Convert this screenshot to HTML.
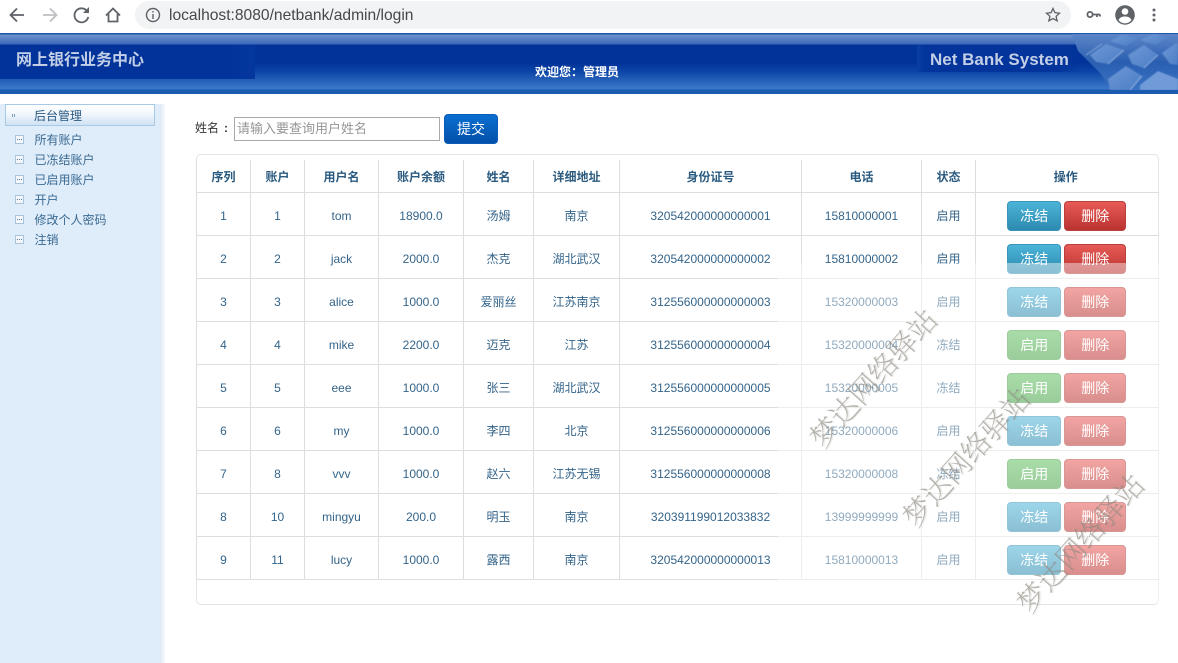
<!DOCTYPE html>
<html lang="zh"><head><meta charset="utf-8"><title>login</title>
<style>
*{box-sizing:border-box}
html,body{margin:0;padding:0;width:1178px;height:663px;overflow:hidden;background:#fff;font-family:"Liberation Sans","Noto Sans CJK SC",sans-serif;font-size:12px;color:#34648a}
.a{position:absolute}
#chrome{left:0;top:0;width:1178px;height:33px;background:#fff}
#pill{left:135px;top:1px;width:936px;height:28px;border-radius:14px;background:#f1f3f4}
#url{left:169px;top:7px;font-size:15.6px;color:#45484c;line-height:18px;white-space:nowrap}
#hdr{left:0;top:33px;width:1178px;height:61px;overflow:hidden;background:linear-gradient(#1d55a6 0,#1d55a6 1px,#6d92cf 2px,#3d69b8 11px,#023399 12px,#023399 30px,#0a44a6 38px,#3c7ac9 56px,#2f72c4 56px,#1b5cb1 57px,#1b5cb1 61px)}
#hl{left:0;top:12px;width:255px;height:34px;background:linear-gradient(90deg,#02339b 0,#02339b 90%,#04379e 100%)}
#hr{left:917px;top:12px;width:165px;height:27px;background:linear-gradient(90deg,#0a3fa3 0,#03349b 5%,#03349b 85%,rgba(3,52,155,0) 100%)}
#sb{left:0;top:104px;width:160px;height:559px;background:#dfecfa}
#sb2{left:160px;top:104px;width:5px;height:559px;background:linear-gradient(90deg,#dfe9f4,#f5f9fd)}
#sbh{left:5px;top:104px;width:150px;height:22px;border:1px solid #a9cae6;background:linear-gradient(#fff,#f2f7fd 45%,#cfe2f5);color:#2a5a80;line-height:22px;padding-left:28px}
.mi{left:34.500px;color:#3a6a92;line-height:16px;white-space:nowrap}
.ic{left:15px;width:9px;height:9px;border:1px solid #a9c3da;background:#f3f7fb}
.ic:after{content:"";position:absolute;left:1px;top:3px;width:5px;height:1px;background:repeating-linear-gradient(90deg,#5b7f9e 0 1px,transparent 1px 2px)}
#lb{left:195px;top:120px;color:#333;line-height:16px;font-size:12px}
#inp{left:234px;top:117px;width:206px;height:24px;border:1px solid #a9a9a9;color:#969696;font-size:13px;line-height:22px;padding-left:2px;background:#fff;white-space:nowrap}
#sub{left:444px;top:114px;width:54px;height:30px;border-radius:4px;background:linear-gradient(#0a6fd0,#0350aa);color:#fff;font-size:14px;text-align:center;line-height:28px;border:1px solid #0a5cb8}
#panel{left:196px;top:154px;width:963px;height:451px;border:1px solid #e4e4e4;border-radius:5px;background:#fff}
table{position:absolute;left:196px;top:160px;border-collapse:collapse;table-layout:fixed;width:962px}
td,th{border:1px solid #dedede;text-align:center;padding:4px 0 0;font-weight:normal;overflow:visible;white-space:nowrap}
tr{height:43px}
tr.h{height:32px}
th{font-weight:bold;color:#2a5a80;border-top:0;padding-top:2px}
td:last-child,th:last-child{border-right:0}
td:last-child{padding-right:1px}
th:last-child{padding-right:3px}
.b{display:inline-block;vertical-align:middle;width:54px;height:30px;border-radius:4px;color:#fff;font-size:14px;line-height:28px;text-align:center;margin-top:1px}
.b+.b{margin-left:3px;width:62px}
.f{background:linear-gradient(#4cb4d8,#2c8ab0);border:1px solid #3a95b8}
.d{background:linear-gradient(#e85b57,#b93330);border:1px solid #b8403d}
.e{background:linear-gradient(#60c060,#4aa34a);border:1px solid #4ea54e}
#fade{left:778px;top:263px;width:400px;height:340px;background:rgba(255,255,255,.45)}
.wm{font-family:"Noto Serif CJK SC","Liberation Serif",serif;font-weight:200;font-size:29px;line-height:36px;color:#8f8a80;opacity:.65;white-space:nowrap;transform:translate(-50%,-50%) rotate(-48deg);text-shadow:1px 1px 1px rgba(120,120,110,.3)}
</style></head><body>
<div class="a" id="chrome"></div>
<div class="a" id="pill"></div>
<svg class="a" style="left:0;top:0" width="170" height="32" viewBox="0 0 170 32" fill="none">
<path d="M24 15H11M17 8.500 10.500 15 17 21.500" stroke="#5f6368" stroke-width="1.800"/>
<path d="M43 15H56M50 8.500 56.500 15 50 21.500" stroke="#bdbfc2" stroke-width="1.800"/>
<path d="M87 11a7 7 0 1 0 1.300 6" stroke="#5f6368" stroke-width="1.800"/><path d="M89 7v6h-6z" fill="#5f6368"/>
<path d="M106 15.500 113 8.500 120 15.500M108.500 14v7.500h9V14" stroke="#5f6368" stroke-width="1.800"/>
<circle cx="153" cy="15" r="6.500" stroke="#5f6368" stroke-width="1.400"/><path d="M153 14v5M153 11v1.500" stroke="#5f6368" stroke-width="1.400"/>
</svg>
<div class="a" id="url">localhost:8080/netbank/admin/login</div>
<svg class="a" style="left:1030px;top:0" width="148" height="32" viewBox="0 0 148 32" fill="none">
<path d="M23 8.500l1.900 4.200 4.600.5-3.400 3.100 1 4.500-4.100-2.300-4.100 2.300 1-4.500-3.400-3.100 4.600-.5z" stroke="#5f6368" stroke-width="1.300"/>
<circle cx="60" cy="14.500" r="2.600" stroke="#5f6368" stroke-width="1.800"/><path d="M62.500 14.500h7.500M67 14.500v2.500M70 14.500v2" stroke="#5f6368" stroke-width="1.800"/>
<circle cx="95" cy="15" r="9.800" fill="#5f6368"/><circle cx="95" cy="11.500" r="3.300" fill="#fff"/><path d="M88.500 20c1.500-3 4-3.500 6.500-3.500s5 .5 6.500 3.500a8 8 0 0 1-13 0z" fill="#fff"/>
<circle cx="124" cy="10" r="1.500" fill="#5f6368"/><circle cx="124" cy="15" r="1.500" fill="#5f6368"/><circle cx="124" cy="20" r="1.500" fill="#5f6368"/>
</svg>

<div class="a" id="hdr">
<div class="a" id="hl"></div><div class="a" id="hr"></div>
<svg class="a" style="left:1070px;top:0" width="108" height="57" viewBox="0 0 108 57">
<defs><linearGradient id="k" x1="0" y1="0" x2="1" y2="1"><stop offset="0" stop-color="#6f98d4"/><stop offset="1" stop-color="#4a7dc6"/></linearGradient>
<linearGradient id="bgk" x1="0" y1="0" x2="0" y2="1"><stop offset="0" stop-color="#5d86c8"/><stop offset=".5" stop-color="#2a5eb0"/><stop offset="1" stop-color="#3a74c4"/></linearGradient>
<filter id="bl"><feGaussianBlur stdDeviation=".5"/></filter></defs>
<path d="M2 1 108 1 108 57 42 57 30 40 8 18Z" fill="url(#bgk)"/>
<g filter="url(#bl)">
<path d="M20 22 36 11 54 17 38 31 26 29Z" fill="url(#k)"/>
<path d="M40 8 52 2 68 5 56 13Z" fill="url(#k)"/>
<path d="M58 22 74 12 88 22 74 35 62 31Z" fill="url(#k)"/>
<path d="M38 46 56 33 72 43 60 57 40 57Z" fill="url(#k)"/>
<path d="M70 7 84 1 98 4 86 12Z" fill="url(#k)"/>
<path d="M92 20 106 10 108 11 108 32 100 31Z" fill="url(#k)"/>
<path d="M70 52 88 38 108 46 108 57 70 57Z" fill="#6f9bd8"/>
<path d="M38 31 54 17M74 35 88 22M60 57 72 43M32 11 16 22" stroke="#b4cbec" stroke-width="1" fill="none" opacity=".6"/>
</g>
</svg>
<div class="a" style="left:16px;top:17px;font-size:16px;font-weight:bold;color:#c3cfe6;line-height:22px;white-space:nowrap">网上银行业务中心</div>
<div class="a" style="left:930px;top:16px;font-size:17px;font-weight:bold;color:#c3cfe6;line-height:22px;white-space:nowrap">Net Bank System</div>
<div class="a" style="left:535px;top:31px;font-size:12px;font-weight:bold;color:#fff;line-height:16px;white-space:nowrap">欢迎您：管理员</div>
</div>

<div class="a" id="sb"></div><div class="a" id="sb2"></div>
<div class="a" id="sbh">后台管理</div>
<div class="a" style="left:12px;top:114px;width:4px;height:3px;background:repeating-linear-gradient(90deg,#7d9cb8 0 1px,transparent 1px 2px)"></div>
<div class="a ic" style="top:135px"></div><div class="a mi" style="top:132px">所有账户</div>
<div class="a ic" style="top:155px"></div><div class="a mi" style="top:152px">已冻结账户</div>
<div class="a ic" style="top:175px"></div><div class="a mi" style="top:172px">已启用账户</div>
<div class="a ic" style="top:195px"></div><div class="a mi" style="top:192px">开户</div>
<div class="a ic" style="top:215px"></div><div class="a mi" style="top:212px">修改个人密码</div>
<div class="a ic" style="top:235px"></div><div class="a mi" style="top:232px">注销</div>

<div class="a" id="lb">姓名</div><div class="a" style="left:224px;top:120px;color:#333;line-height:16px;font-weight:bold">:</div>
<div class="a" id="inp">请输入要查询用户姓名</div>
<div class="a" id="sub">提交</div>

<div class="a" id="panel"></div>
<table>
<colgroup><col style="width:54px"><col style="width:54px"><col style="width:74px"><col style="width:85px"><col style="width:70px"><col style="width:86px"><col style="width:182px"><col style="width:120px"><col style="width:54px"><col style="width:183px"></colgroup>
<tr class="h"><th>序列</th><th>账户</th><th>用户名</th><th>账户余额</th><th>姓名</th><th>详细地址</th><th>身份证号</th><th>电话</th><th>状态</th><th>操作</th></tr>
<tr><td>1</td><td>1</td><td>tom</td><td>18900.0</td><td>汤姆</td><td>南京</td><td>320542000000000001</td><td>15810000001</td><td>启用</td><td><span class="b f">冻结</span><span class="b d">删除</span></td></tr>
<tr><td>2</td><td>2</td><td>jack</td><td>2000.0</td><td>杰克</td><td>湖北武汉</td><td>320542000000000002</td><td>15810000002</td><td>启用</td><td><span class="b f">冻结</span><span class="b d">删除</span></td></tr>
<tr><td>3</td><td>3</td><td>alice</td><td>1000.0</td><td>爱丽丝</td><td>江苏南京</td><td>312556000000000003</td><td>15320000003</td><td>启用</td><td><span class="b f">冻结</span><span class="b d">删除</span></td></tr>
<tr><td>4</td><td>4</td><td>mike</td><td>2200.0</td><td>迈克</td><td>江苏</td><td>312556000000000004</td><td>15320000004</td><td>冻结</td><td><span class="b e">启用</span><span class="b d">删除</span></td></tr>
<tr><td>5</td><td>5</td><td>eee</td><td>1000.0</td><td>张三</td><td>湖北武汉</td><td>312556000000000005</td><td>15320000005</td><td>冻结</td><td><span class="b e">启用</span><span class="b d">删除</span></td></tr>
<tr><td>6</td><td>6</td><td>my</td><td>1000.0</td><td>李四</td><td>北京</td><td>312556000000000006</td><td>15320000006</td><td>启用</td><td><span class="b f">冻结</span><span class="b d">删除</span></td></tr>
<tr><td>7</td><td>8</td><td>vvv</td><td>1000.0</td><td>赵六</td><td>江苏无锡</td><td>312556000000000008</td><td>15320000008</td><td>冻结</td><td><span class="b e">启用</span><span class="b d">删除</span></td></tr>
<tr><td>8</td><td>10</td><td>mingyu</td><td>200.0</td><td>明玉</td><td>南京</td><td>320391199012033832</td><td>13999999999</td><td>启用</td><td><span class="b f">冻结</span><span class="b d">删除</span></td></tr>
<tr><td>9</td><td>11</td><td>lucy</td><td>1000.0</td><td>露西</td><td>南京</td><td>320542000000000013</td><td>15810000013</td><td>启用</td><td><span class="b f">冻结</span><span class="b d">删除</span></td></tr>
</table>
<div class="a" id="fade"></div>
<div class="a wm" style="left:873px;top:378px">梦达网络驿站</div>
<div class="a wm" style="left:966px;top:457px">梦达网络驿站</div>
<div class="a wm" style="left:1080px;top:543px">梦达网络驿站</div>
</body></html>
